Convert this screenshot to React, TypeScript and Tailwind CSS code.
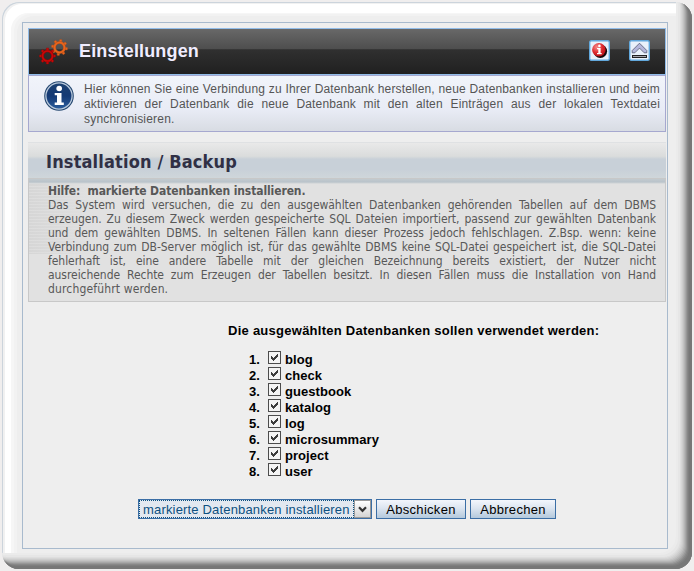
import React from "react";

const databases = ["blog", "check", "guestbook", "katalog", "log", "microsummary", "project", "user"];

const helpLines = [
  "Das System wird versuchen, die zu den ausgewählten Datenbanken gehörenden Tabellen auf dem DBMS",
  "erzeugen. Zu diesem Zweck werden gespeicherte SQL Dateien importiert, passend zur gewählten Datenbank",
  "und dem gewählten DBMS. In seltenen Fällen kann dieser Prozess jedoch fehlschlagen. Z.Bsp. wenn: keine",
  "Verbindung zum DB-Server möglich ist, für das gewählte DBMS keine SQL-Datei gespeichert ist, die SQL-Datei",
  "fehlerhaft ist, eine andere Tabelle mit der gleichen Bezeichnung bereits existiert, der Nutzer nicht",
  "ausreichende Rechte zum Erzeugen der Tabellen besitzt. In diesen Fällen muss die Installation von Hand",
];

const introLines = [
  "Hier können Sie eine Verbindung zu Ihrer Datenbank herstellen, neue Datenbanken installieren und beim",
  "aktivieren der Datenbank die neue Datenbank mit den alten Einträgen aus der lokalen Textdatei",
];

const teeth = [0, 45, 90, 135, 180, 225, 270, 315];

function Gear({ x, y, color, edge, turn }: { x: number; y: number; color: string; edge: string; turn: number }) {
  return (
    <g transform={`translate(${x} ${y}) rotate(${turn})`}>
      {teeth.map((a) => (
        <path key={a} d="M-1.3 -5 L-1.1 -8 L1.1 -8 L1.3 -5 Z" fill={color} stroke={edge} strokeWidth="0.4" transform={`rotate(${a})`} />
      ))}
      <circle r="5" fill="none" stroke={edge} strokeWidth="2.6" />
      <circle r="5" fill="none" stroke={color} strokeWidth="1.7" />
    </g>
  );
}

function GearsIcon() {
  return (
    <svg width="32" height="28" viewBox="0 0 32 28" className="block">
      <Gear x={21.5} y={9.5} color="#e8651c" edge="#b8501c" turn={10} />
      <Gear x={9.5} y={18} color="#c90808" edge="#900505" turn={0} />
    </svg>
  );
}

function InfoIcon() {
  return (
    <svg width="30" height="30" viewBox="0 0 30 30" className="block">
      <defs>
        <linearGradient id="infoBlue" x1="0" y1="0" x2="0" y2="1">
          <stop offset="0" stopColor="#1c4070" />
          <stop offset="0.5" stopColor="#153a75" />
          <stop offset="1" stopColor="#2a5c9c" />
        </linearGradient>
      </defs>
      <circle cx="15" cy="15" r="14.8" fill="#23466f" />
      <circle cx="15" cy="15" r="13.1" fill="url(#infoBlue)" stroke="#b9c9dc" strokeWidth="1.3" />
      <circle cx="15.2" cy="7.5" r="2.8" fill="#fff" />
      <path d="M10.7 12h6.8v9.6h2.3v2.3h-9.1v-2.3H13v-7.3h-2.3z" fill="#fff" />
    </svg>
  );
}

function RedInfoIcon() {
  return (
    <svg width="21" height="21" viewBox="0 0 21 21" className="block">
      <defs>
        <radialGradient id="redBall" cx="0.35" cy="0.3" r="0.75">
          <stop offset="0" stopColor="#f58a8a" />
          <stop offset="0.55" stopColor="#de2b30" />
          <stop offset="1" stopColor="#b80f17" />
        </radialGradient>
      </defs>
      <rect x="0.7" y="0.7" width="19.6" height="19.6" rx="1.5" fill="#e9f1fb" stroke="#62a8dc" strokeWidth="1.4" />
      <circle cx="11.3" cy="11.2" r="6.8" fill="#160508" />
      <circle cx="9.9" cy="9.8" r="6.8" fill="url(#redBall)" />
      <circle cx="10.4" cy="5.9" r="1.3" fill="#fff" />
      <path d="M8 8h3.6v5h1.1v1.3H8V13h1.3V9.3H8z" fill="#fff" />
    </svg>
  );
}

function UpIcon() {
  return (
    <svg width="21" height="21" viewBox="0 0 21 21" className="block">
      <rect x="0.7" y="0.7" width="19.6" height="19.6" rx="1.5" fill="#e9f1fb" stroke="#62a8dc" strokeWidth="1.4" />
      <path d="M10.5 3.2L17.8 10.5V12.8H15.2L10.5 8.1L5.8 12.8H3.2V10.5z" fill="#b4b7dc" stroke="#44475f" strokeWidth="0.7" />
      <rect x="3.5" y="15.5" width="14" height="2" fill="#a4a4ac" stroke="#222" strokeWidth="1" />
    </svg>
  );
}

function CheckBox() {
  return (
    <svg width="13" height="13" viewBox="0 0 13 13" className="block" shapeRendering="crispEdges">
      <rect x="0.5" y="0.5" width="12" height="12" fill="#f4f4f4" stroke="#4c4c4c" />
      <path d="M3 5v3h1v1h1v1h1V9h1V8h1V7h1V6h1V3H9v1H8v1H7v1H6v1H5V6H4V5z" fill="#3c3c3c" />
    </svg>
  );
}

export default function App() {
  return (
    <div className="h-[571px] w-[694px] overflow-hidden bg-[#f0eeee] pl-[2px] pt-[2px] font-['Liberation_Sans',Arial,sans-serif]">
      <div className="h-[567px] w-[690px] rounded-[17px] bg-[#eee] pl-[20px] pt-[20px] shadow-[inset_-3px_-3px_0_#777,inset_-4px_-4px_0_#7e7e7e,inset_-5px_-5px_0_#888,inset_-6px_-6px_0_#979797,inset_-7px_-7px_0_#a7a7a7,inset_-8px_-8px_0_#b5b5b5,inset_-9px_-9px_0_#c2c2c2,inset_-10px_-10px_0_#cdcdcd,inset_-11px_-11px_0_#d6d6d6,inset_-12px_-12px_0_#dedede,inset_-14px_-14px_0_#e6e6e6,inset_-16px_-16px_0_#ebebeb,inset_1px_1px_0_#ccd4dc,inset_3px_2px_0_#f1f1f1,inset_9px_11px_0_#fff,inset_12px_12px_0_#f6f6f6,inset_15px_14px_0_#f2f2f2]">
        <div className="flex h-[527px] w-[646px] flex-col border border-[#a8bacd] bg-[#eee] px-[5px] pt-[5px]">
          <header className="flex h-[47px] w-[638px] shrink-0 items-center border border-[#91bce8] bg-[linear-gradient(#686868_0%,#4e4e4e_44%,#303030_46%,#202020_100%)] pl-[9px] pr-[15px]">
            <GearsIcon />
            <h1 className="ml-[9px] pb-[1px] text-[18px] font-bold leading-[20px] tracking-[0.15px] text-[#f0edff]">Einstellungen</h1>
            <div className="ml-auto flex gap-[19px] pb-[3px]">
              <RedInfoIcon />
              <UpIcon />
            </div>
          </header>

          <section className="flex h-[57px] w-[638px] shrink-0 border border-[#a6a8cf] bg-[linear-gradient(#f1f4fa,#e9ecf6_60%,#d8dce3)] pl-[15px] pt-[5px]">
            <InfoIcon />
            <div className="ml-[10px] w-[576px] pt-[1px] text-[12px] leading-[15px] text-[#555]">
              {introLines.map((line) => (
                <p key={line} className="whitespace-nowrap tracking-[0.15px] [text-align-last:justify]">{line}</p>
              ))}
              <p className="tracking-[0.2px]">synchronisieren.</p>
            </div>
          </section>

          <h2 className="mt-[10px] flex h-[36px] w-[638px] shrink-0 items-center border-t border-[#dfe1e3] bg-[linear-gradient(#e9e9e9_0%,#dadcdc_38%,#c8d0d8_46%,#c8d0d8_75%,#cfd6da_100%)] pl-[18px] pt-[2px] font-['DejaVu_Sans_Condensed','DejaVu_Sans',sans-serif] text-[18px] font-bold tracking-[0.15px] text-[#303045]">
            Installation / Backup
          </h2>

          <section className="h-[124px] w-[638px] shrink-0 border border-[#c8c8c8] bg-[linear-gradient(#c3cacf_0,#b9c3ca_3px,#e1e1e1_5px)] font-['DejaVu_Sans_Condensed','DejaVu_Sans',sans-serif] text-[12px] leading-[14px] text-[#585858]">
            <div className="mt-[5px] bg-[linear-gradient(to_right,#e1e1e100,#e1e1e1),repeating-linear-gradient(#d6d6d6_0,#d6d6d6_2px,#dddddd_2px,#dddddd_3px)] bg-[length:64px_70px] bg-no-repeat pl-[19px]">
              <div className="w-[608px] whitespace-nowrap">
                <p className="whitespace-pre font-bold tracking-[-0.1px]">Hilfe:  markierte Datenbanken installieren.</p>
                {helpLines.map((line) => (
                  <p key={line} className="tracking-[-0.05px] [text-align-last:justify]">{line}</p>
                ))}
                <p className="tracking-[0.15px]">durchgeführt werden.</p>
              </div>
            </div>
          </section>

          <main className="text-[13px] font-bold leading-[16px] text-black">
            <p className="ml-[200px] mt-[21px] whitespace-nowrap tracking-[0.26px]">Die ausgewählten Datenbanken sollen verwendet werden:</p>
            <ol className="ml-[200px] mt-[12px] tracking-[0.06px]">
              {databases.map((name, i) => (
                <li key={name} className="flex h-[16px] items-start">
                  <span className="w-[32px] pt-px text-right">{i + 1}.</span>
                  <span className="ml-[8px]"><CheckBox /></span>
                  <span className="ml-[4px] pt-px">{name}</span>
                </li>
              ))}
            </ol>
          </main>

          <div className="ml-[110px] mt-[20px] flex h-[20px] gap-[4px] text-[13px] leading-[18px] tracking-[0.3px]">
            <div className="flex w-[234px] border border-[#3b6ea5] bg-white">
              <span className="w-[215px] whitespace-nowrap border border-dotted border-[#0d5080] bg-[#e2e8f0] pl-[3px] leading-[17px] tracking-[0.17px] text-[#0d5080]">markierte Datenbanken installieren</span>
              <span className="flex w-[17px] items-center justify-center border border-[#9a9a9a] bg-[linear-gradient(#fff,#d4d4d4)]">
                <svg width="9" height="7" viewBox="0 0 9 7"><path d="M1 1.2L4.5 4.8L8 1.2" fill="none" stroke="#333" strokeWidth="2.2" /></svg>
              </span>
            </div>
            <button className="w-[90px] border border-[#3b6ea5] bg-[linear-gradient(#f3f6fc,#dce5f0_45%,#b4c9dc)] pt-px">Abschicken</button>
            <button className="w-[86px] border border-[#3b6ea5] bg-[linear-gradient(#f3f6fc,#dce5f0_45%,#b4c9dc)] pt-px">Abbrechen</button>
          </div>
        </div>
      </div>
    </div>
  );
}
